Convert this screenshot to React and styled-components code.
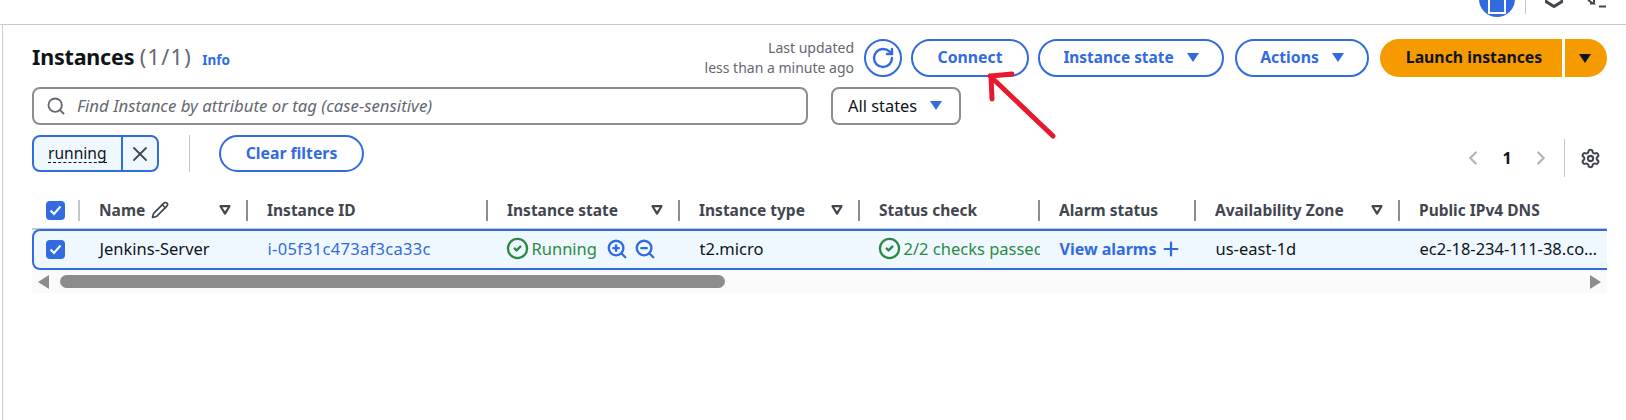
import React from 'react'
import styled, { createGlobalStyle } from 'styled-components'
import { Pencil, Search, RotateCw, X, ChevronLeft, ChevronRight, Settings, ZoomIn, ZoomOut, Plus, CircleCheck } from 'lucide-react'

const BLUE = '#326be0'
const GREEN = '#2a8a43'

const GlobalStyle = createGlobalStyle`
    html, body {
        margin: 0;
        background: #fff;
        font-family: "Noto Sans", "Open Sans", sans-serif;
        font-size: 16px;
        color: #0f141a;
    }
    * { box-sizing: border-box; }
`

const Page = styled.div`
    position: relative;
    width: 1626px;
    height: 420px;
    overflow: hidden;
`

const TopBar = styled.div`
    height: 25px;
    border-bottom: 1px solid #c9c9c9;
    display: flex;
    justify-content: flex-end;
    align-items: flex-start;
    overflow: hidden;
`

const Avatar = styled.div`
    width: 36px;
    height: 36px;
    border-radius: 50%;
    background: ${BLUE};
    margin-top: -19px;
    display: flex;
    align-items: flex-end;
    justify-content: center;
    padding-bottom: 3px;
`

const TopDivider = styled.div`
    width: 1px;
    height: 14px;
    background: #c6c6cd;
    margin: 0 19px 0 10px;
`

const TopIcon = styled.svg`
    display: block;
    margin-right: ${props => props.$right || 0}px;
`

const Main = styled.div`
    margin-left: 2px;
    border-left: 1px solid #d0d0d0;
    height: 395px;
    padding: 14px 19px 0 29px;
`

const HeaderRow = styled.div`
    display: flex;
    align-items: center;
    height: 38px;
`

const TitleBlock = styled.div`
    flex: 1;
    display: flex;
    align-items: baseline;
    gap: 10px;
    margin-top: -2px;
`

const Title = styled.h1`
    margin: 0;
    font-size: 21.5px;
    line-height: 28px;
    font-weight: 700;
    letter-spacing: -0.2px;
`

const Count = styled.span`
    font-weight: 400;
    color: #656871;
    letter-spacing: 1.4px;
`

const InfoLink = styled.a`
    color: ${BLUE};
    font-size: 13.5px;
    font-weight: 700;
`

const LastUpdated = styled.div`
    text-align: right;
    color: #656871;
    font-size: 14px;
    line-height: 20px;
    margin-right: 10px;
`

const RoundIcon = styled.button`
    width: 38px;
    height: 38px;
    border-radius: 50%;
    border: 2px solid ${BLUE};
    background: #fff;
    color: ${BLUE};
    padding: 0;
    display: flex;
    align-items: center;
    justify-content: center;
    margin-right: 9px;
`

const PillButton = styled.button`
    height: ${props => props.$height || 38}px;
    width: ${props => props.$width}px;
    border-radius: 20px;
    border: 2px solid ${BLUE};
    background: #fff;
    color: ${BLUE};
    font: 700 ${props => props.$size || 15.8}px "Noto Sans", sans-serif;
    display: flex;
    align-items: center;
    justify-content: center;
    gap: 13px;
    padding: 0 0 2px;
    margin-right: ${props => props.$right || 0}px;
`

const LaunchButton = styled.button`
    height: 38px;
    width: 182px;
    border: 0;
    border-radius: 20px 0 0 20px;
    background: #f59b00;
    color: #0f141a;
    font: 700 15.8px "Noto Sans", sans-serif;
    padding: 0 0 2px 6px;
`

const LaunchCaret = styled.button`
    height: 38px;
    width: 42px;
    border: 0;
    border-radius: 0 20px 20px 0;
    background: #f59b00;
    margin-left: 3px;
    padding: 0 2px 0 0;
    display: flex;
    align-items: center;
    justify-content: center;
`

const SearchRow = styled.div`
    display: flex;
    gap: 23px;
    margin-top: 10px;
`

const SearchBox = styled.div`
    width: 776px;
    height: 38px;
    border: 2px solid #8c8c94;
    border-radius: 8px;
    display: flex;
    align-items: center;
    gap: 11px;
    padding-left: 12px;
    color: #656871;
`

const Placeholder = styled.span`
    font-style: italic;
    color: #656871;
    font-size: 16.8px;
    padding-bottom: 2px;
`

const StateSelect = styled.div`
    width: 130px;
    height: 38px;
    border: 2px solid #8c8c94;
    border-radius: 8px;
    display: flex;
    align-items: center;
    gap: 13px;
    padding: 0 0 2px 15px;
    font-size: 16.4px;
`

const FilterRow = styled.div`
    display: flex;
    align-items: center;
    height: 37px;
    margin-top: 10px;
`

const Token = styled.div`
    width: 127px;
    height: 37px;
    border: 2px solid ${BLUE};
    border-radius: 8px;
    background: #f0f8ff;
    display: flex;
    margin-right: 30px;
`

const TokenLabel = styled.span`
    width: 89px;
    border-right: 2px solid ${BLUE};
    padding-left: 14px;
    display: flex;
    align-items: center;
`

const TokenText = styled.span`
    font-size: 15.6px;
    line-height: 18px;
    border-bottom: 1px dashed #0f141a;
`

const TokenClose = styled.span`
    flex: 1;
    display: flex;
    align-items: center;
    justify-content: center;
    color: #424650;
`

const VerticalLine = styled.div`
    width: 1px;
    height: 37px;
    background: #c6c6cd;
    margin-right: 29px;
`

const Pagination = styled.div`
    margin-left: auto;
    margin-right: 6px;
    display: flex;
    align-items: center;
    height: 38px;
    margin-top: 9px;
    color: #b4b4bb;
`

const PageNumber = styled.span`
    color: #0f141a;
    font-weight: 700;
    width: 46px;
    padding-bottom: 0;
    text-align: center;
`

const PageDivider = styled.div`
    width: 1px;
    height: 38px;
    background: #c6c6cd;
    margin: 0 15px 0 12px;
`

const TableWrap = styled.div`
    margin-top: 28px;
    width: 1575px;
`

const Columns = styled.div`
    display: grid;
    grid-template-columns: ${props => props.$first || 48}px 168px 240px 192px 180px 180px 156px 204px 207px;
`

const HeaderGrid = styled(Columns)`
    height: 30px;
    border-bottom: 2px solid #c6c6cd;
    padding-bottom: 7px;
`

const HeadCell = styled.div`
    display: flex;
    align-items: center;
    padding: 0 15px 2px 19px;
    font-size: 15.5px;
    font-weight: 700;
    color: #424650;
    border-right: ${props => props.$last ? 0 : 2}px solid #8c8c94;
    white-space: nowrap;
    overflow: hidden;
`

const CheckCell = styled.div`
    display: flex;
    align-items: center;
    padding-left: ${props => props.$pad || 14}px;
    border-right: ${props => props.$line ? '2px solid #c6c6cd' : '0'};
`

const Checkbox = styled.span`
    width: 19px;
    height: 19px;
    border-radius: 4px;
    background: ${BLUE};
    display: flex;
    align-items: center;
    justify-content: center;
`

const SortCaret = styled.svg`
    margin-left: auto;
    flex-shrink: 0;
`

const RowGrid = styled(Columns)`
    height: 41px;
    margin-top: -1px;
    position: relative;
    border: solid ${BLUE};
    border-width: 2px 0 2px 2px;
    border-radius: 8px 0 0 8px;
    background: #f0f8ff;
`

const Cell = styled.div`
    display: flex;
    align-items: center;
    gap: 3px;
    padding: 0 0 2px 19.5px;
    white-space: nowrap;
    overflow: hidden;
    font-size: ${props => props.$bold ? 16 : 16.5}px;
    letter-spacing: ${props => props.$spaced ? 0.3 : 0}px;
    color: ${props => props.$color || '#0f141a'};
    font-weight: ${props => props.$bold ? 700 : 400};
`

const CellIcon = styled.span`
    display: flex;
    flex-shrink: 0;
    margin-left: -2px;
`

const ZoomIcons = styled.span`
    display: flex;
    gap: 6px;
    margin-left: 6px;
    color: ${BLUE};
`

const ScrollTrack = styled.div`
    height: 23px;
    background: #fafafa;
    display: flex;
    align-items: center;
    padding: 0 6px;
`

const ScrollThumb = styled.div`
    width: 665px;
    height: 13px;
    border-radius: 7px;
    background: #8c8c8c;
    margin-left: 11px;
`

const ArrowOverlay = styled.svg`
    position: absolute;
    left: 980px;
    top: 66px;
`

const Caret = ({ color = BLUE }) => (
    <svg width="12" height="9" viewBox="0 0 12 9"><path d="M0 0h12L6 9z" fill={color} /></svg>
)

const FilterCaret = () => (
    <SortCaret width="12" height="10" viewBox="0 0 12 10">
        <path d="M1.5 1.2h9L6 8.6z" fill="none" stroke="#424650" strokeWidth="2.2" strokeLinejoin="round" />
    </SortCaret>
)

const Tick = () => (
    <svg width="13" height="11" viewBox="0 0 13 11"><path d="M1.5 5.5l3.5 3.5 6.5-7.5" fill="none" stroke="#fff" strokeWidth="2" /></svg>
)

const StatusIcon = () => (
    <CellIcon><CircleCheck size={23} strokeWidth={2.4} /></CellIcon>
)

const App = () => {
    return (
        <Page>
            <GlobalStyle />
            <TopBar>
                <Avatar>
                    <svg width="18" height="18" viewBox="0 0 18 18">
                        <rect x="1" y="1" width="16" height="16" fill="none" stroke="#fff" strokeWidth="2" />
                    </svg>
                </Avatar>
                <TopDivider />
                <TopIcon $right={24} width="18" height="8" viewBox="0 0 18 8">
                    <path d="M1 0v1.5L9 6.5l8-5V0" fill="none" stroke="#424650" strokeWidth="3" />
                </TopIcon>
                <TopIcon $right={19} width="20" height="9" viewBox="0 0 20 9">
                    <path d="M1 0l5 3.5h-3M7 0v3.5M12 6.5h7" fill="none" stroke="#424650" strokeWidth="2" />
                </TopIcon>
            </TopBar>
            <Main>
                <HeaderRow>
                    <TitleBlock>
                        <Title>Instances <Count>(1/1)</Count></Title>
                        <InfoLink>Info</InfoLink>
                    </TitleBlock>
                    <LastUpdated>Last updated<br />less than a minute ago</LastUpdated>
                    <RoundIcon><RotateCw size={24} strokeWidth={2.4} /></RoundIcon>
                    <PillButton $width={118} $right={9}>Connect</PillButton>
                    <PillButton $width={186} $right={11} $size={15.4}>Instance state <Caret /></PillButton>
                    <PillButton $width={134} $right={11}>Actions <Caret /></PillButton>
                    <LaunchButton>Launch instances</LaunchButton>
                    <LaunchCaret><Caret color="#0f141a" /></LaunchCaret>
                </HeaderRow>
                <SearchRow>
                    <SearchBox>
                        <Search size={20} strokeWidth={2.2} />
                        <Placeholder>Find Instance by attribute or tag (case-sensitive)</Placeholder>
                    </SearchBox>
                    <StateSelect>All states <Caret /></StateSelect>
                </SearchRow>
                <FilterRow>
                    <Token>
                        <TokenLabel><TokenText>running</TokenText></TokenLabel>
                        <TokenClose><X size={24} strokeWidth={1.8} /></TokenClose>
                    </Token>
                    <VerticalLine />
                    <PillButton $width={145} $height={37}>Clear filters</PillButton>
                    <Pagination>
                        <ChevronLeft size={22} strokeWidth={2.6} />
                        <PageNumber>1</PageNumber>
                        <ChevronRight size={22} strokeWidth={2.6} />
                        <PageDivider />
                        <Settings size={21} color="#424650" strokeWidth={2.3} />
                    </Pagination>
                </FilterRow>
                <TableWrap>
                    <HeaderGrid>
                        <CheckCell $line><Checkbox><Tick /></Checkbox></CheckCell>
                        <HeadCell>Name <Pencil size={18} strokeWidth={2.2} style={{ marginLeft: 6 }} /> <FilterCaret /></HeadCell>
                        <HeadCell>Instance ID</HeadCell>
                        <HeadCell>Instance state <FilterCaret /></HeadCell>
                        <HeadCell>Instance type <FilterCaret /></HeadCell>
                        <HeadCell>Status check</HeadCell>
                        <HeadCell>Alarm status</HeadCell>
                        <HeadCell>Availability Zone <FilterCaret /></HeadCell>
                        <HeadCell $last>Public IPv4 DNS</HeadCell>
                    </HeaderGrid>
                    <RowGrid $first={46}>
                        <CheckCell $pad={12}><Checkbox><Tick /></Checkbox></CheckCell>
                        <Cell>Jenkins-Server</Cell>
                        <Cell $color={BLUE} $spaced>i-05f31c473af3ca33c</Cell>
                        <Cell $color={GREEN}><StatusIcon />Running
                            <ZoomIcons><ZoomIn size={22} strokeWidth={2.6} /><ZoomOut size={22} strokeWidth={2.6} /></ZoomIcons>
                        </Cell>
                        <Cell>t2.micro</Cell>
                        <Cell $color={GREEN}><StatusIcon />2/2 checks passed</Cell>
                        <Cell $color={BLUE} $bold>View alarms <Plus size={22} strokeWidth={2.4} /></Cell>
                        <Cell>us-east-1d</Cell>
                        <Cell>ec2-18-234-111-38.co…</Cell>
                    </RowGrid>
                    <ScrollTrack>
                        <svg width="11" height="14" viewBox="0 0 11 14"><path d="M11 0v14L0 7z" fill="#8c8c8c" /></svg>
                        <ScrollThumb />
                        <svg width="11" height="14" viewBox="0 0 11 14" style={{ marginLeft: 'auto' }}><path d="M0 0v14l11-7z" fill="#8c8c8c" /></svg>
                    </ScrollTrack>
                </TableWrap>
            </Main>
            <ArrowOverlay width="80" height="80" viewBox="0 0 80 80">
                <path d="M10 10L73 70M11 10L32 8M11 10L12 33" fill="none" stroke="#e8192f" strokeWidth="5" strokeLinecap="round" />
            </ArrowOverlay>
        </Page>
    )
}

export default App
